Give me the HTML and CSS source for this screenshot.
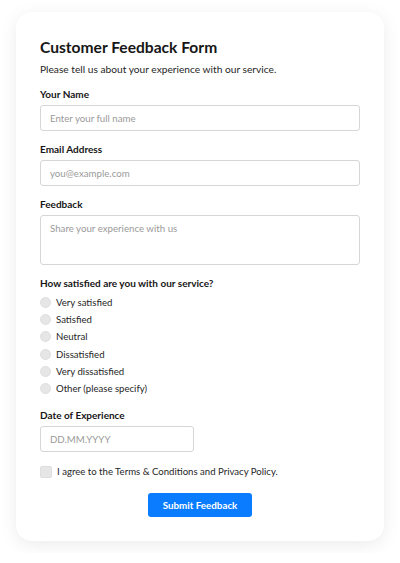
FILE: index.html
```html
<!DOCTYPE html>
<html lang="en">
<head>
    <meta charset="UTF-8">
    <meta name="viewport" content="width=device-width, initial-scale=1.0">
    <title>Customer Feedback Form</title>
    <link rel="stylesheet" href="styles.css">
</head>
<body>

    <div class="card">
        <h1>Customer Feedback Form</h1>
        <p class="subtitle">Please tell us about your experience with our service.</p>

        <!-- Datos de contacto -->
        <div class="field">
            <label for="name">Your Name</label>
            <input type="text" id="name" class="text-input" placeholder="Enter your full name">
        </div>

        <div class="field">
            <label for="email">Email Address</label>
            <input type="email" id="email" class="text-input" placeholder="you@example.com">
        </div>

        <div class="field">
            <label for="feedback">Feedback</label>
            <textarea id="feedback" class="text-input" placeholder="Share your experience with us"></textarea>
        </div>

        <!-- Satisfaccion -->
        <div class="field">
            <span class="label">How satisfied are you with our service?</span>
            <div class="options">
                <label class="option"><input type="radio" name="rating"> Very satisfied</label>
                <label class="option"><input type="radio" name="rating"> Satisfied</label>
                <label class="option"><input type="radio" name="rating"> Neutral</label>
                <label class="option"><input type="radio" name="rating"> Dissatisfied</label>
                <label class="option"><input type="radio" name="rating"> Very dissatisfied</label>
                <label class="option"><input type="radio" name="rating"> Other (please specify)</label>
            </div>
        </div>

        <div class="field">
            <label for="date">Date of Experience</label>
            <input type="text" id="date" class="text-input date" placeholder="DD.MM.YYYY">
        </div>

        <label class="agree"><input type="checkbox"> I agree to the Terms &amp; Conditions and Privacy Policy.</label>

        <button class="btn" type="button">Submit Feedback</button>
    </div>

</body>
</html>
```

FILE: styles.css
```css
body {
    font-family: Lato, "Open Sans", Arial, sans-serif;
    margin: 0;
    background-color: #fff;
    color: #161616;
}

.card {
    margin: 12px 16px;
    padding: 24px 24px 24px;
    background-color: #fff;
    border-radius: 16px;
    box-shadow: 0 4px 18px rgba(0, 0, 0, 0.08);
}

h1 {
    margin: 0 0 3px;
    font-size: 15.6px;
    line-height: 22px;
    font-weight: 700;
}

.subtitle {
    margin: 0 0 10px;
    font-size: 10.2px;
    line-height: 16px;
    color: #262626;
}

.field {
    margin-bottom: 11px;
}

.field > label,
.field .label {
    display: block;
    margin-bottom: 4px;
    font-size: 10px;
    line-height: 14px;
    font-weight: 700;
}

.text-input {
    display: block;
    box-sizing: border-box;
    width: 100%;
    height: 26px;
    margin: 0;
    padding: 0 9px;
    border: 1px solid #d6d6d6;
    border-radius: 3px;
    font-family: inherit;
    font-size: 9.7px;
    color: #161616;
}

textarea.text-input {
    height: 50px;
    padding: 6px 9px;
    resize: none;
}

.text-input::placeholder {
    color: #9a9a9a;
}

.text-input.date {
    width: 154px;
}

.options {
    display: flex;
    flex-direction: column;
}

.option,
.agree {
    display: flex;
    align-items: center;
    gap: 5px;
    height: 17.2px;
    font-size: 9.6px;
    color: #262626;
}

.option input {
    flex-shrink: 0;
    appearance: none;
    width: 11px;
    height: 11px;
    margin: 0;
    padding: 0;
    border: 1px solid #dedede;
    border-radius: 50%;
    background-color: #e6e6e6;
}

.agree {
    margin-top: 2px;
}

.agree input {
    flex-shrink: 0;
    appearance: none;
    width: 12px;
    height: 12px;
    margin: 0;
    padding: 0;
    border: 1px solid #dedede;
    border-radius: 2px;
    background-color: #e6e6e6;
}

.btn {
    display: block;
    width: 104px;
    height: 24px;
    margin: 13px auto 0;
    padding: 0;
    border: none;
    border-radius: 3px;
    background-color: #0a7cff;
    color: #fff;
    font-family: inherit;
    font-size: 9.8px;
    font-weight: 700;
    cursor: pointer;
}
```
